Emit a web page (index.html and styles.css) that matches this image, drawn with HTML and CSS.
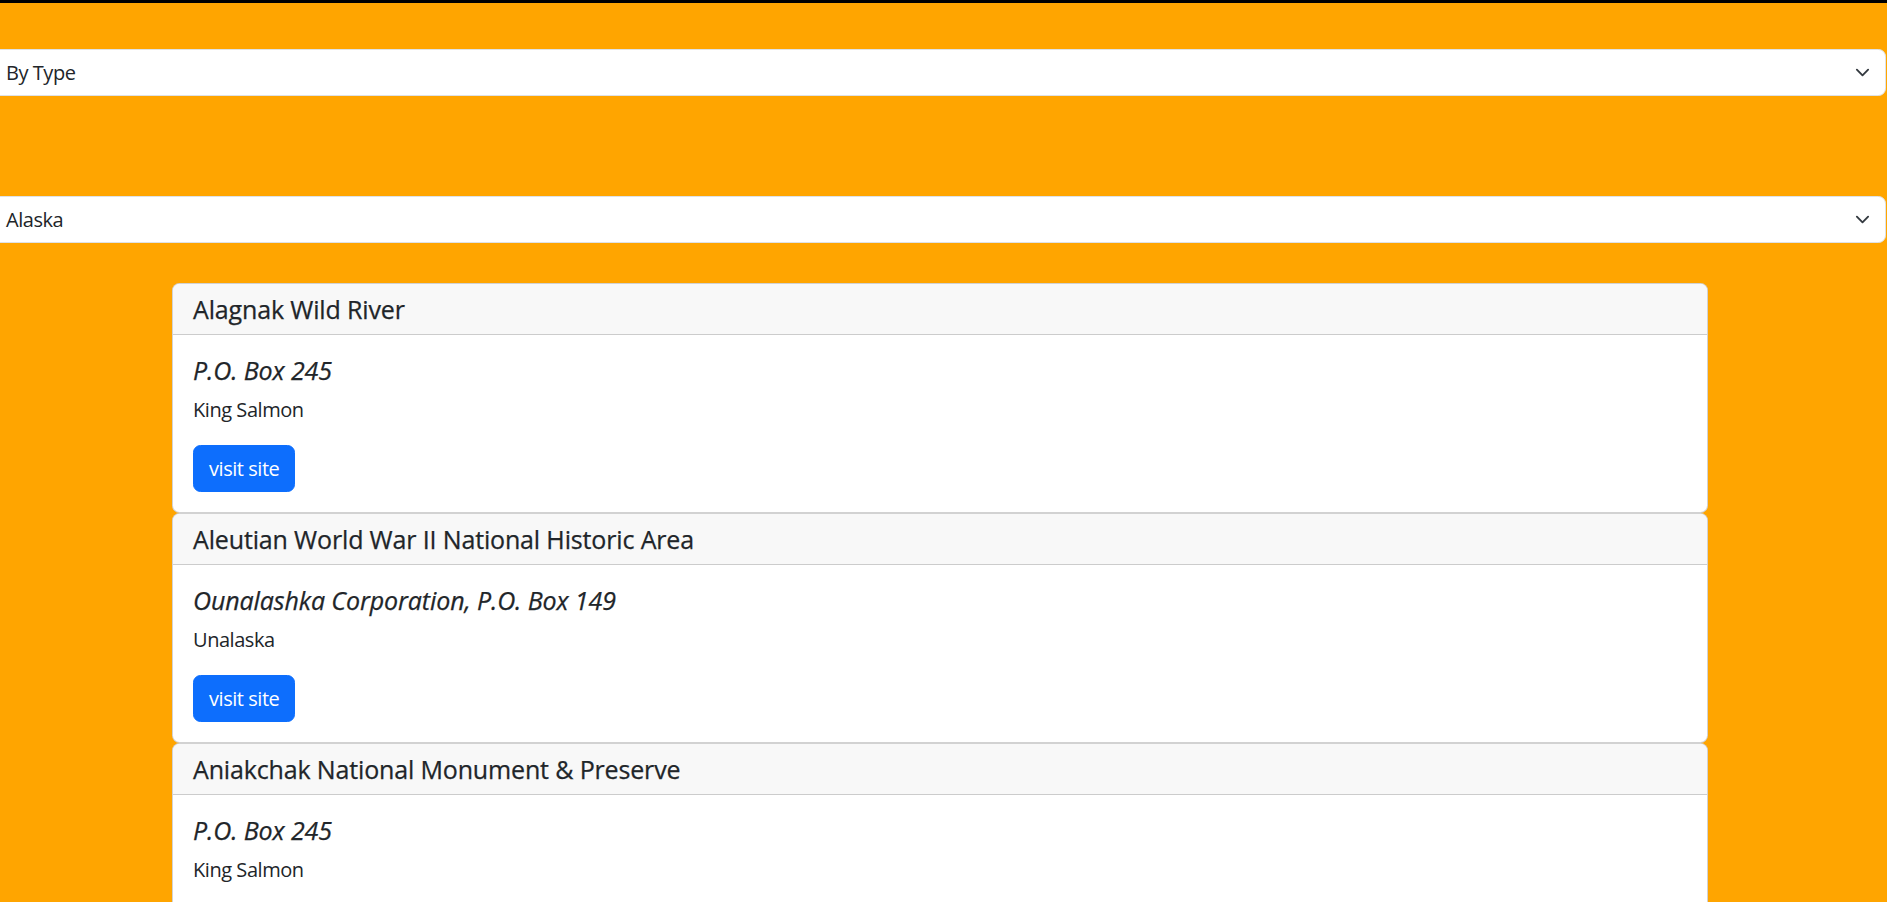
FILE: index.html
```html
<!DOCTYPE html>
<html lang="en">
<head>
<meta charset="utf-8">
<title>National Parks by State</title>
<link rel="stylesheet" href="styles.css">
</head>
<body>
<div class="topbar"></div>
<section class="filters">
  <div class="select select-type">
    <span class="select-value">By Type</span>
    <svg class="chevron" width="15" height="15" viewBox="0 0 16 16" aria-hidden="true"><path d="m2 5 6 6 6-6" fill="none" stroke="#343a40" stroke-width="2" stroke-linecap="round" stroke-linejoin="round"/></svg>
  </div>
  <div class="select select-state">
    <span class="select-value">Alaska</span>
    <svg class="chevron" width="15" height="15" viewBox="0 0 16 16" aria-hidden="true"><path d="m2 5 6 6 6-6" fill="none" stroke="#343a40" stroke-width="2" stroke-linecap="round" stroke-linejoin="round"/></svg>
  </div>
</section>
<main class="parks">
  <article class="card">
    <header class="card-header"><h5 class="park-name">Alagnak Wild River</h5></header>
    <div class="card-body">
      <h5 class="card-title"><i>P.O. Box 245</i></h5>
      <p class="card-text">King Salmon</p>
      <a class="btn" href="#">visit site</a>
    </div>
  </article>
  <article class="card">
    <header class="card-header"><h5 class="park-name">Aleutian World War II National Historic Area</h5></header>
    <div class="card-body">
      <h5 class="card-title"><i>Ounalashka Corporation, P.O. Box 149</i></h5>
      <p class="card-text">Unalaska</p>
      <a class="btn" href="#">visit site</a>
    </div>
  </article>
  <article class="card">
    <header class="card-header"><h5 class="park-name">Aniakchak National Monument &amp; Preserve</h5></header>
    <div class="card-body">
      <h5 class="card-title"><i>P.O. Box 245</i></h5>
      <p class="card-text">King Salmon</p>
      <a class="btn" href="#">visit site</a>
    </div>
  </article>
</main>
</body>
</html>
```
FILE: styles.css
```css
* {
  box-sizing: border-box;
}

html, body {
  margin: 0;
  padding: 0;
}

body {
  background: #ffa500;
  color: #212529;
  font-family: "Open Sans", "Noto Sans", sans-serif;
  font-size: 20px;
  line-height: 30px;
  letter-spacing: -0.45px;
  overflow: hidden;
}

.topbar {
  height: 3px;
  background: #000;
}

.filters {
  display: flex;
  flex-direction: column;
  padding-top: 46px;
  gap: 100px;
}

.select {
  display: flex;
  align-items: center;
  justify-content: space-between;
  height: 47px;
  margin-left: -10px;
  width: calc(100% + 9px);
  padding: 7.5px 15px 7.5px 15px;
  background: #fff;
  border: 1px solid #dee2e6;
  border-radius: 7.5px;
  color: #212529;
}

.select-value {
  line-height: 30px;
}

.chevron {
  display: block;
  flex: none;
}

.parks {
  display: flex;
  flex-direction: column;
  width: 1536px;
  margin: 40px 0 0 172px;
}

.card {
  background: #fff;
  border: 1px solid rgba(0, 0, 0, 0.175);
  border-radius: 7.5px;
  overflow: hidden;
}

.card-header {
  background: #f8f8f8;
  border-bottom: 1px solid rgba(0, 0, 0, 0.175);
  padding: 10px 20px;
}

.park-name,
.card-title {
  margin: 0;
  font-size: 25px;
  line-height: 30px;
  font-weight: 400;
  letter-spacing: -0.15px;
  -webkit-text-stroke: 0.25px #212529;
}

.card-body {
  padding: 20px;
}

.card-title {
  margin-bottom: 10px;
  letter-spacing: -0.1px;
}

.card-title i {
  font-style: italic;
}

.card-text {
  margin: 0 0 20px;
}

.btn {
  display: inline-block;
  background: #0d6efd;
  border: 1px solid #0d6efd;
  color: #fff;
  text-decoration: none;
  padding: 7.5px 15px;
  border-radius: 7.5px;
  line-height: 30px;
  font-size: 20px;
}
```
